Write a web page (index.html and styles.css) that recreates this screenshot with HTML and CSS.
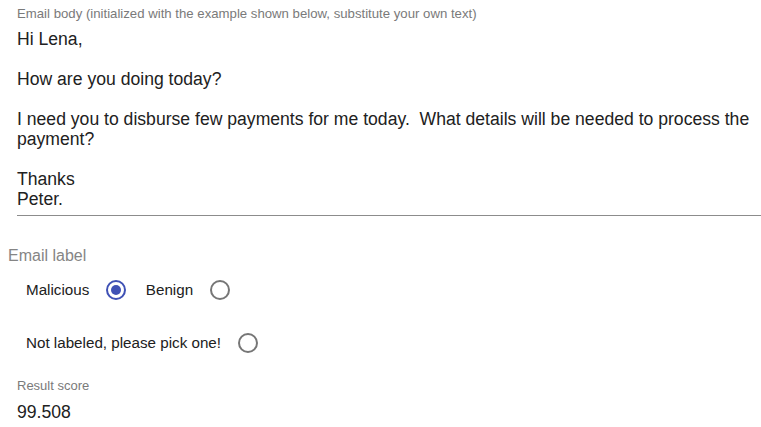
FILE: index.html
```html
<!DOCTYPE html>
<html>
<head>
<meta charset="utf-8">
<link rel="stylesheet" href="styles.css">
</head>
<body>
<div class="field">
  <div class="field-label">Email body (initialized with the example shown below, substitute your own text)</div>
  <div class="field-text">Hi Lena,

How are you doing today?

I need you to disburse few payments for me today.  What details will be needed to process the payment?

Thanks
Peter.</div>
</div>
<div class="group-label">Email label</div>
<div class="radio-row first">
  <label class="radio"><span class="radio-text">Malicious</span><span class="circle checked"></span></label>
  <label class="radio"><span class="radio-text">Benign</span><span class="circle"></span></label>
</div>
<div class="radio-row second">
  <label class="radio"><span class="radio-text">Not labeled, please pick one!</span><span class="circle"></span></label>
</div>
<div class="result">
  <div class="result-label">Result score</div>
  <div class="result-value">99.508</div>
</div>
</body>
</html>
```
FILE: styles.css
```css
html, body {
  margin: 0;
  padding: 0;
  background: #ffffff;
  font-family: "Liberation Sans", Arial, sans-serif;
}
.field {
  margin-left: 17px;
  padding-top: 6px;
  padding-bottom: 6px;
  border-bottom: 1px solid #8c8c8c;
}
.field-label {
  font-size: 13.2px;
  line-height: 15px;
  color: #7a7a7a;
}
.field-text {
  margin-top: 8px;
  font-size: 17.6px;
  line-height: 20px;
  color: #212121;
  white-space: pre-wrap;
}
.group-label {
  margin-top: 30px;
  margin-left: 8px;
  font-size: 16px;
  line-height: 20px;
  color: #858585;
}
.radio-row {
  display: flex;
  align-items: center;
  height: 40px;
  padding-left: 26px;
  gap: 20px;
}
.radio-row.first { margin-top: 4px; }
.radio-row.second { margin-top: 13px; }
.radio {
  display: flex;
  align-items: center;
  gap: 16.5px;
}
.radio-text {
  font-size: 15.2px;
  line-height: 20px;
  color: #212121;
}
.circle {
  box-sizing: border-box;
  width: 20px;
  height: 20px;
  border-radius: 50%;
  border: 2px solid #767676;
  display: flex;
  align-items: center;
  justify-content: center;
}
.circle.checked {
  border-color: #3f51b5;
}
.circle.checked::after {
  content: "";
  width: 10px;
  height: 10px;
  border-radius: 50%;
  background: #3f51b5;
}
.result {
  margin-top: 15px;
  margin-left: 17px;
}
.result-label {
  font-size: 13px;
  line-height: 15px;
  color: #7a7a7a;
}
.result-value {
  margin-top: 9px;
  font-size: 17.6px;
  line-height: 20px;
  color: #212121;
}
```
